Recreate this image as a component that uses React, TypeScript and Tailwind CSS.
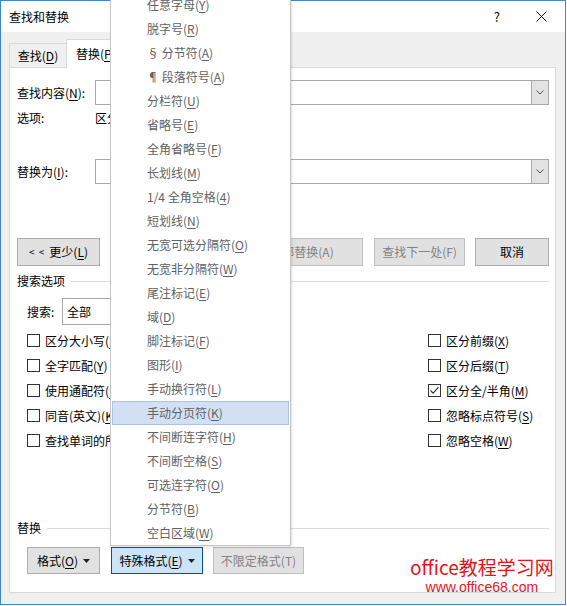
import React from 'react';

function Mn({ s }: { s: string }) {
  const i = s.indexOf('&');
  if (i < 0) return <>{s}</>;
  return (
    <>
      {s.slice(0, i)}
      <span className="underline underline-offset-[2px] decoration-1">{s[i + 1]}</span>
      {s.slice(i + 2)}
    </>
  );
}

function Caret() {
  return (
    <svg width="7" height="4" viewBox="0 0 7 4" className="ml-[5px]">
      <polygon points="0,0 7,0 3.5,4" fill="#222" />
    </svg>
  );
}

function ComboBox({ width, value }: { width?: string; value?: string }) {
  return (
    <div className={`relative flex h-[25px] items-center border border-[#a8a8a8] bg-white ${width ?? 'flex-1'}`}>
      {value && <span className="pl-[5px] text-[12px] text-black">{value}</span>}
      <div className="absolute right-0 top-0 flex h-[23px] w-[17px] items-center justify-center border-l border-[#a8a8a8] bg-[#e3e3e3]">
        <svg width="8" height="5" viewBox="0 0 8 5">
          <polyline points="0.5,0.5 4,4 7.5,0.5" fill="none" stroke="#555" strokeWidth="1" />
        </svg>
      </div>
    </div>
  );
}

function Check({ label, checked }: { label: string; checked?: boolean }) {
  return (
    <div className="flex h-[25px] items-center whitespace-nowrap">
      <div className="flex h-[13px] w-[13px] items-center justify-center border border-[#333] bg-white">
        {checked && (
          <svg width="11" height="11" viewBox="0 0 11 11">
            <polyline points="1.5,5.5 4.2,8.2 9.5,2.2" fill="none" stroke="#333" strokeWidth="1.1" />
          </svg>
        )}
      </div>
      <span className="ml-[5px]">
        <Mn s={label} />
      </span>
    </div>
  );
}

const menuItems = [
  '任意字母(&Y)',
  '脱字号(&R)',
  '§ 分节符(&A)',
  '¶ 段落符号(&A)',
  '分栏符(&U)',
  '省略号(&E)',
  '全角省略号(&F)',
  '长划线(&M)',
  '1/4 全角空格(&4)',
  '短划线(&N)',
  '无宽可选分隔符(&O)',
  '无宽非分隔符(&W)',
  '尾注标记(&E)',
  '域(&D)',
  '脚注标记(&F)',
  '图形(&I)',
  '手动换行符(&L)',
  '手动分页符(&K)',
  '不间断连字符(&H)',
  '不间断空格(&S)',
  '可选连字符(&O)',
  '分节符(&B)',
  '空白区域(&W)',
];

export default function App() {
  return (
    <div className="relative h-[606px] w-[567px] overflow-hidden bg-white font-['Noto_Sans_CJK_SC',sans-serif] text-[12px] leading-[16px] text-black">
      <div className="flex h-[605px] w-[566px] flex-col border border-[#3f87d5] bg-[#f0f0f0]">
        {/* title bar */}
        <div className="flex h-[31px] shrink-0 items-center bg-white pl-[8px]">
          <span>查找和替换</span>
          <span className="ml-auto text-[13px]">?</span>
          <svg width="11" height="11" viewBox="0 0 11 11" className="ml-[36px] mr-[18px]">
            <path d="M0.5 0.5 L10.5 10.5 M10.5 0.5 L0.5 10.5" stroke="#111" strokeWidth="1" />
          </svg>
        </div>

        {/* tabs */}
        <div className="flex h-[35px] shrink-0 items-end pl-[8px]">
          <div className="flex h-[24px] w-[57px] items-center justify-center border-l border-t border-[#d9d9d9]">
            <Mn s="查找(&D)" />
          </div>
          <div className="relative z-10 -mb-px flex h-[29px] w-[67px] items-center border-l border-r border-t border-[#d9d9d9] bg-white pl-[9px]">
            <Mn s="替换(&P)" />
          </div>
        </div>

        {/* panel */}
        <div className="ml-[8px] flex h-[526px] w-[547px] shrink-0 flex-col border border-[#d9d9d9] bg-white">
          <div className="mt-[12px] flex items-center pl-[7px] pr-[6px]">
            <span className="w-[78px]">
              <Mn s="查找内容(&N):" />
            </span>
            <ComboBox />
          </div>
          <div className="mt-[5px] flex h-[16px] items-center pl-[7px]">
            <span className="w-[78px]">选项:</span>
            <span>区分全/半角</span>
          </div>
          <div className="mt-[33px] flex items-center pl-[7px] pr-[6px]">
            <span className="w-[78px]">
              <Mn s="替换为(&I):" />
            </span>
            <ComboBox />
          </div>

          <div className="mt-[54px] flex h-[28px] pl-[7px] pr-[6px]">
            <div className="flex w-[83px] items-center justify-center border border-[#adadad] bg-[#e1e1e1]">
              <span className="mr-[4px] text-[10px] tracking-[1px]">{'< <'}</span>
              <Mn s="更少(&L)" />
            </div>
            <div className="ml-auto flex w-[90px] items-center justify-center border border-[#bfbfbf] bg-[#e1e1e1] text-[#838383]">
              替换(R)
            </div>
            <div className="ml-[10px] flex w-[122px] items-center justify-center border border-[#bfbfbf] bg-[#e1e1e1] text-[#838383]">
              全部替换(A)
            </div>
            <div className="ml-[11px] flex w-[91px] items-center justify-center border border-[#bfbfbf] bg-[#e1e1e1] text-[#838383]">
              查找下一处(F)
            </div>
            <div className="ml-[10px] flex w-[74px] items-center justify-center border border-[#adadad] bg-[#e1e1e1]">
              取消
            </div>
          </div>

          <div className="mt-[7px] flex h-[16px] items-center pl-[7px] pr-[6px]">
            <span>搜索选项</span>
            <div className="ml-[6px] h-px flex-1 bg-[#dcdcdc]" />
          </div>

          <div className="mt-[9px] flex items-center pl-[17px]">
            <span className="w-[35px]">搜索:</span>
            <div className="flex h-[27px] w-[130px] items-center border border-[#a8a8a8] bg-white pl-[4px]">全部</div>
          </div>

          <div className="mt-[3px] flex pl-[17px]">
            <div className="flex w-[401px] flex-col">
              <Check label="区分大小写(&H)" />
              <Check label="全字匹配(&Y)" />
              <Check label="使用通配符(&U)" />
              <Check label="同音(英文)(&K)" />
              <Check label="查找单词的所有形式(英文)(&W)" />
            </div>
            <div className="flex flex-col">
              <Check label="区分前缀(&X)" />
              <Check label="区分后缀(&T)" />
              <Check label="区分全/半角(&M)" checked />
              <Check label="忽略标点符号(&S)" />
              <Check label="忽略空格(&W)" />
            </div>
          </div>

          <div className="mt-[67px] flex h-[16px] items-center pl-[7px] pr-[6px]">
            <span>替换</span>
            <div className="ml-[6px] h-px flex-1 bg-[#dcdcdc]" />
          </div>

          <div className="mt-[11px] flex h-[27px] pl-[17px]">
            <div className="flex w-[73px] items-center justify-center border border-[#adadad] bg-[#e1e1e1]">
              <Mn s="格式(&O)" />
              <Caret />
            </div>
            <div className="ml-[11px] flex w-[92px] items-center justify-center border border-[#005499] bg-[#cce4f7]">
              <Mn s="特殊格式(&E)" />
              <Caret />
            </div>
            <div className="ml-[10px] flex w-[91px] items-center justify-center border border-[#bfbfbf] bg-[#e1e1e1] text-[#838383]">
              不限定格式(T)
            </div>
          </div>
        </div>
      </div>

      {/* watermark */}
      <div className="absolute left-[410px] top-[555px] flex flex-col items-center text-[#e5141b]">
        <span className="text-[19px] leading-[24px]">office教程学习网</span>
        <span className="font-['Liberation_Sans',sans-serif] text-[14px] leading-[16px]">www.office68.com</span>
      </div>

      {/* special format menu */}
      <div className="absolute left-[110px] top-[-8px] z-20 w-[181px] border border-[#c6c6c6] bg-white text-[#626262] shadow-[1px_1px_2px_rgba(0,0,0,0.12)]">
        {menuItems.map((m, i) => (
          <div
            key={i}
            className={`mx-px flex h-[24px] items-center border pl-[34px] ${
              i === 17 ? 'border-[#aac3e6] bg-[#d3e0f3]' : 'border-transparent'
            }`}
          >
            <Mn s={m} />
          </div>
        ))}
      </div>
    </div>
  );
}
